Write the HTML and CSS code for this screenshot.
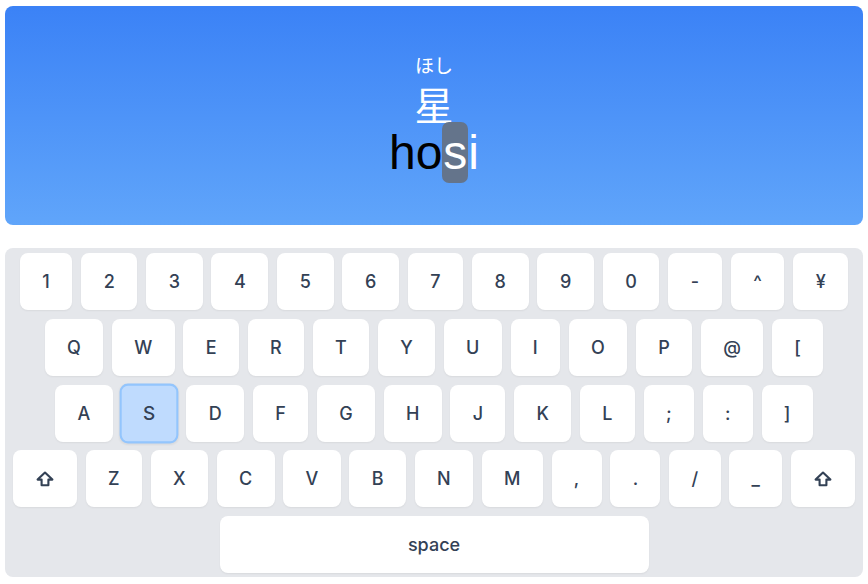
FILE: index.html
```html
<!DOCTYPE html>
<html lang="ja">
<head>
<meta charset="utf-8">
<title>Typing</title>
<link rel="stylesheet" href="styles.css">
</head>
<body>
<div class="app">
  <section class="display">
    <div class="furigana">ほし</div>
    <div class="kanji">星</div>
    <div class="romaji"><span class="typed">ho</span><span class="current">s</span><span class="rest">i</span></div>
  </section>
  <section class="keyboard">
    <div class="row row-num">
      <div class="key">1</div><div class="key">2</div><div class="key">3</div><div class="key">4</div><div class="key">5</div><div class="key">6</div><div class="key">7</div><div class="key">8</div><div class="key">9</div><div class="key">0</div><div class="key">-</div><div class="key">^</div><div class="key">¥</div>
    </div>
    <div class="row">
      <div class="key">Q</div><div class="key">W</div><div class="key">E</div><div class="key">R</div><div class="key">T</div><div class="key">Y</div><div class="key">U</div><div class="key">I</div><div class="key">O</div><div class="key">P</div><div class="key">@</div><div class="key">[</div>
    </div>
    <div class="row">
      <div class="key">A</div><div class="key key-active">S</div><div class="key">D</div><div class="key">F</div><div class="key">G</div><div class="key">H</div><div class="key">J</div><div class="key">K</div><div class="key">L</div><div class="key">;</div><div class="key">:</div><div class="key">]</div>
    </div>
    <div class="row">
      <div class="key key-shift"><svg class="shift-icon" viewBox="0 0 18 16" width="18" height="16"><polygon points="9,1.5 1.6,8.6 5.6,8.6 5.6,14.3 12.4,14.3 12.4,8.6 16.4,8.6" fill="none" stroke="currentColor" stroke-width="2.1" stroke-linejoin="round"/></svg></div>
      <div class="key">Z</div><div class="key">X</div><div class="key">C</div><div class="key">V</div><div class="key">B</div><div class="key">N</div><div class="key">M</div><div class="key">,</div><div class="key">.</div><div class="key">/</div><div class="key">_</div>
      <div class="key key-shift"><svg class="shift-icon" viewBox="0 0 18 16" width="18" height="16"><polygon points="9,1.5 1.6,8.6 5.6,8.6 5.6,14.3 12.4,14.3 12.4,8.6 16.4,8.6" fill="none" stroke="currentColor" stroke-width="2.1" stroke-linejoin="round"/></svg></div>
    </div>
    <div class="row">
      <div class="key key-space">space</div>
    </div>
  </section>
</div>
</body>
</html>
```

FILE: styles.css
```css
* { box-sizing: border-box; }
html, body { margin: 0; padding: 0; background: #ffffff; }
body { font-family: Inter, "Noto Sans", "Noto Sans CJK JP", sans-serif; }

.app {
  padding: 6px 5px 0 5px;
  display: flex;
  flex-direction: column;
  gap: 23px;
}

.display {
  height: 219px;
  border-radius: 8px;
  background: linear-gradient(to bottom, #3b82f6, #60a5fa);
  display: flex;
  flex-direction: column;
  align-items: center;
  justify-content: center;
  padding-top: 2px;
}

.furigana {
  color: #ffffff;
  font-family: "Noto Sans CJK JP", sans-serif;
  font-size: 19px;
  line-height: 24px;
  margin-bottom: 4px;
}

.kanji {
  color: #ffffff;
  font-family: "Noto Sans CJK JP", sans-serif;
  font-size: 39px;
  line-height: 44px;
}

.romaji {
  font-family: "Liberation Sans", Arial, sans-serif;
  font-size: 48px;
  line-height: 56px;
}
.typed { color: #000000; }
.current {
  color: #ffffff;
  background: #64748b;
  border-radius: 7px;
  padding: 4px 1px;
}
.rest { color: #ffffff; }

.keyboard {
  background: #e5e7eb;
  border-radius: 8px;
  padding: 5px 8px 4px 8px;
  display: flex;
  flex-direction: column;
  gap: 8.75px;
}

.row {
  display: flex;
  justify-content: center;
  gap: 8.8px;
}

.key {
  height: 57px;
  padding: 0 22.3px;
  background: #ffffff;
  border-radius: 8px;
  box-shadow: 0 1px 2px rgba(0, 0, 0, 0.06);
  display: flex;
  align-items: center;
  justify-content: center;
  color: #334155;
  font-size: 18px;
  font-weight: 500;
}

.row-num .key { padding: 0 22.6px; }

.key-active {
  background: #bfdbfe;
  border: 2px solid #93c5fd;
  padding: 0 20.3px;
  transform: scale(1.05);
}

.key-shift { padding: 0 23px; }
.shift-icon { display: block; color: #334155; }

.key-space {
  width: 429px;
}
```
